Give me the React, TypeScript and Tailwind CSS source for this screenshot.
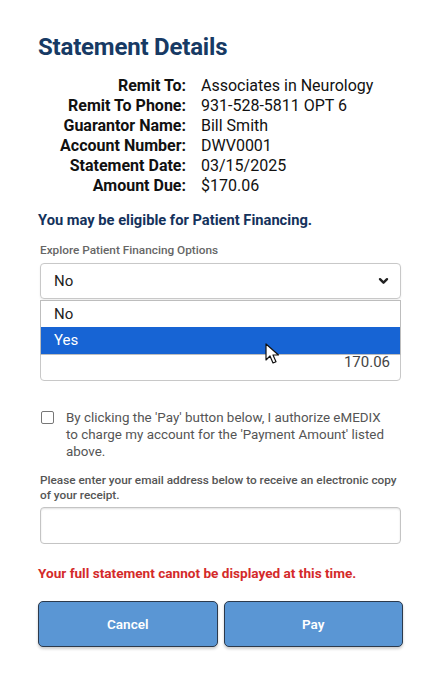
import { useState } from "react";

const rows: [string, string][] = [
  ["Remit To:", "Associates in Neurology"],
  ["Remit To Phone:", "931-528-5811 OPT 6"],
  ["Guarantor Name:", "Bill Smith"],
  ["Account Number:", "DWV0001"],
  ["Statement Date:", "03/15/2025"],
  ["Amount Due:", "$170.06"],
];

const Chevron = () => (
  <svg width="11" height="8" viewBox="0 0 11 8" className="mr-[5px]">
    <path d="M2 2.2l3.5 3.5 3.5-3.5" fill="none" stroke="#222" strokeWidth="2.4" strokeLinecap="round" strokeLinejoin="round" />
  </svg>
);

const Cursor = () => (
  <svg width="16" height="22" viewBox="0 0 16 22" className="absolute left-[225px] top-[44px]">
    <path
      d="M1 1v16l4-4 3 7 3-1.3-3-6.7h5.5z"
      fill="#fff"
      stroke="#111"
      strokeWidth="1.2"
      strokeLinejoin="round"
    />
  </svg>
);

const App = () => {
  const [agree, setAgree] = useState(false);

  return (
    <main className="min-h-[689px] bg-white font-['Roboto',sans-serif] pt-[33px] px-[38px]">
      <h1 className="text-[24px] leading-[28px] font-bold text-[#173a64] tracking-[-0.2px]">Statement Details</h1>

      <section className="mt-[15px] grid grid-cols-[148px_1fr] gap-x-[15px] text-[16px] leading-[20px] text-[#111]">
        {rows.map(([label, value]) => (
          <div key={label} className="contents">
            <span className="text-right font-bold">{label}</span>
            <span>{value}</span>
          </div>
        ))}
      </section>

      <h2 className="mt-[14px] text-[14.7px] leading-[20px] font-bold text-[#14325c]">
        You may be eligible for Patient Financing.
      </h2>

      <p className="mt-[13px] ml-[2px] text-[11.8px] leading-[14px] font-medium text-[#666]">
        Explore Patient Financing Options
      </p>

      <div className="mt-[6px] ml-[2px] w-[361px] h-[36px] border border-[#c8c8c8] rounded-[4px] flex items-center justify-between pl-[13px] pr-[6px] text-[15px] text-[#222] shadow-[0_1px_2px_rgba(0,0,0,0.08)]">
        <span>No</span>
        <Chevron />
      </div>

      <section className="relative ml-[2px] w-[361px] h-[82px]">
        <div className="absolute left-0 right-0 bottom-0 h-[42px] border border-[#c8c8c8] rounded-[4px] flex items-end justify-end pr-[10px] pb-[9px] text-[15px] leading-[18px] text-[#444]">
          170.06
        </div>
        <div className="absolute left-0 right-0 top-[1px] border border-[#bdbdbd] bg-white text-[15px] text-[#222]">
          <div className="h-[26px] flex items-center pl-[13px]">No</div>
          <div className="h-[27px] flex items-center pl-[13px] bg-[#1764d4] text-white">Yes</div>
        </div>
        <Cursor />
      </section>

      <label className="mt-[28px] flex gap-[12px] text-[13.4px] leading-[17px] text-[#555]">
        <input
          type="checkbox"
          checked={agree}
          onChange={(e) => setAgree(e.target.checked)}
          className="mt-[2px] ml-[3px] shrink-0 w-[13px] h-[13px] appearance-none border border-[#777] rounded-[2px] bg-white"
        />
        <span className="pr-[10px]">
          By clicking the 'Pay' button below, I authorize eMEDIX to charge my account for the 'Payment Amount' listed above.
        </span>
      </label>

      <p className="mt-[13px] ml-[2px] text-[11.8px] leading-[15px] font-medium text-[#555]">
        Please enter your email address below to receive an electronic copy of your receipt.
      </p>

      <input
        type="text"
        className="mt-[4px] ml-[2px] block w-[361px] h-[37px] border border-[#c4c4c4] rounded-[4px] shadow-[inset_0_1px_2px_rgba(0,0,0,0.12)]"
      />

      <p className="mt-[19px] text-[13.6px] leading-[20px] font-bold text-[#d42a2a]">
        Your full statement cannot be displayed at this time.
      </p>

      <section className="mt-[18px] flex gap-[6px] w-[365px]">
        <button className="flex-1 h-[46px] rounded-[5px] bg-[#5a96d4] border-[1.5px] border-[#2c3a4c] text-white text-[13.5px] font-semibold shadow-[0_2px_3px_rgba(0,0,0,0.2)]">
          Cancel
        </button>
        <button className="flex-1 h-[46px] rounded-[5px] bg-[#5a96d4] border-[1.5px] border-[#2c3a4c] text-white text-[13.5px] font-semibold shadow-[0_2px_3px_rgba(0,0,0,0.2)]">
          Pay
        </button>
      </section>
    </main>
  );
};

export default App;
